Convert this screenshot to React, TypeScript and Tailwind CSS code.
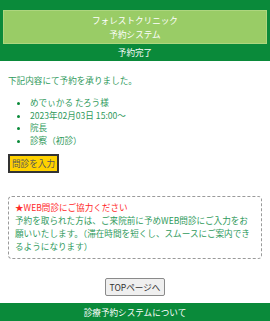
import React from "react";

export default function App() {
  const font = { fontFamily: '"Noto Sans CJK JP", "Noto Sans", sans-serif' };
  return (
    <div className="w-[270px] h-[321px] bg-white overflow-hidden text-[8.6px]" style={font}>
      <div className="bg-[#0a8a3a] pt-[10px]">
        <div className="mx-[3px] bg-[#99cc66] border border-[#add67e] text-white text-center py-[2px] leading-[14px]">
          <div>フォレストクリニック</div>
          <div>予約システム</div>
        </div>
        <div className="text-white text-center leading-[17px]">予約完了</div>
      </div>

      <div className="px-[8px] text-[#2f9a5c]">
        <p className="mt-[13px] leading-[13.5px]">下記内容にて予約を承りました。</p>
        <ul className="mt-[8.5px] pl-[22px] list-disc marker:text-[#0a8a3a] leading-[12.7px]">
          <li>めでぃかる たろう様</li>
          <li>2023年02月03日 15:00～</li>
          <li>院長</li>
          <li>診察（初診）</li>
        </ul>
        <div className="mt-[7px]">
          <button className="h-[19px] px-[2px] bg-[#ffd200] border-2 border-[#333333] text-[#555555] leading-[13px]">
            問診を入力
          </button>
        </div>
        <div className="mt-[23px] border border-dashed border-[#9a9a9a] rounded-[4px] pl-[6px] pr-[4px] pt-[4px] pb-[5px] leading-[13px]">
          <div className="text-[#ff2a2a]">★WEB問診にご協力ください</div>
          <div>
            予約を取られた方は、ご来院前に予めWEB問診にご入力をお
            <br />
            願いいたします。（滞在時間を短くし、スムースにご案内でき
            <br />
            るようになります）
          </div>
        </div>
        <div className="mt-[19px] flex justify-center">
          <button className="h-[18px] px-[4px] bg-[#efefef] border border-[#8a8a8a] rounded-[2px] text-[#333333] leading-[14px]">
            TOPページへ
          </button>
        </div>
      </div>

      <div className="mt-[7px] bg-[#0a8a3a] text-white text-center h-[18px] leading-[18px]">
        診療予約システムについて
      </div>
    </div>
  );
}
